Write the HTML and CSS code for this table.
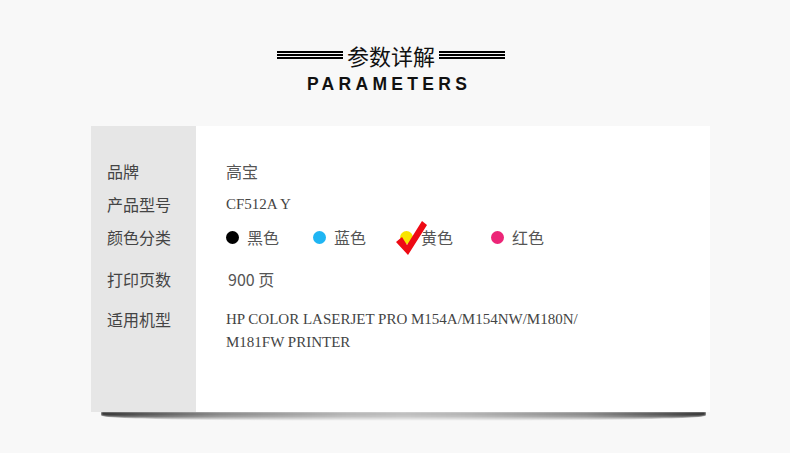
FILE: index.html
```html
<!DOCTYPE html>
<html lang="zh">
<head>
<meta charset="utf-8">
<link rel="stylesheet" href="styles.css">
</head>
<body>
<header class="head">
  <div class="title-row">
    <span class="rule"><i></i><i></i><i></i></span>
    <h1 class="title">参数详解</h1>
    <span class="rule"><i></i><i></i><i></i></span>
  </div>
  <div class="subtitle">PARAMETERS</div>
</header>
<section class="card">
  <div class="label r1">品牌</div><div class="value r1 cjk">高宝</div>
  <div class="label r2">产品型号</div><div class="value r2 serif">CF512A Y</div>
  <div class="label r3">颜色分类</div>
  <div class="value r3 colors">
    <span class="color"><b class="dot black"></b>黑色</span>
    <span class="color"><b class="dot blue"></b>蓝色</span>
    <span class="color picked"><b class="dot yellow"></b>黄色
      <svg class="check" viewBox="0 0 32 35" width="32" height="35"><polygon points="0,21 6,16 11,24 26,0 31,4 12,34" fill="#ee0a14"/></svg>
    </span>
    <span class="color last"><b class="dot pink"></b>红色</span>
  </div>
  <div class="label r4">打印页数</div><div class="value r4 cjk">900 页</div>
  <div class="label r5">适用机型</div><div class="value r5 serif">HP COLOR LASERJET PRO M154A/M154NW/M180N/<br>M181FW PRINTER</div>
</section>
</body>
</html>
```
FILE: styles.css
```css
html, body {
  margin: 0;
  padding: 0;
}
body {
  width: 790px;
  height: 453px;
  background: #f8f8f8;
  font-family: "Noto Sans CJK SC", "Noto Sans", sans-serif;
  overflow: hidden;
}
.head {
  display: flex;
  flex-direction: column;
  align-items: center;
  padding-top: 42px;
}
.title-row {
  display: flex;
  align-items: center;
  gap: 4px;
  margin-left: -8px;
}
.rule {
  display: flex;
  flex-direction: column;
  gap: 1.5px;
  width: 66px;
}
.rule i {
  display: block;
  height: 1.5px;
  background: #000;
}
.title {
  margin: 0;
  font-size: 22px;
  font-weight: 400;
  line-height: 26px;
  color: #111;
}
.subtitle {
  margin-top: 6px;
  margin-left: -12px;
  font-family: "Liberation Sans", Arial, sans-serif;
  font-weight: 700;
  font-size: 17.5px;
  letter-spacing: 4.3px;
  line-height: 20px;
  color: #111;
}
.card {
  position: relative;
  margin: 32px 0 0 91px;
  width: 619px;
  height: 286px;
  box-sizing: border-box;
  padding-top: 29px;
  background: linear-gradient(to right, #e6e6e6 105px, #fff 105px);
  display: grid;
  grid-template-columns: 105px 1fr;
  grid-auto-rows: min-content;
  color: #444;
}
.card::after {
  content: "";
  position: absolute;
  left: 10px;
  right: 4px;
  top: 100%;
  height: 9px;
  background: linear-gradient(to right, #111 0%, #333 6%, #777 20%, #a8a8a8 40%, #b4b4b4 50%, #a8a8a8 60%, #777 80%, #333 94%, #111 100%);
  -webkit-mask-image: linear-gradient(to bottom, #000 0%, rgba(0,0,0,0.7) 50%, transparent 100%);
  mask-image: linear-gradient(to bottom, #000 0%, rgba(0,0,0,0.7) 50%, transparent 100%);
  filter: blur(1px);
  border-radius: 0 0 40% 40% / 0 0 60% 60%;
}
.label {
  padding-left: 16px;
  font-size: 16px;
  line-height: 33px;
  color: #444;
}
.value {
  padding-left: 30px;
  font-size: 16px;
  line-height: 33px;
  color: #555;
}
.serif {
  font-family: "Liberation Serif", "Times New Roman", serif;
  font-size: 15px;
  letter-spacing: 0;
  color: #444;
}
.r4 { margin-top: 9px; }
.r5 { margin-top: 12px; line-height: 23px; }
.value.r4 { padding-left: 32px; }
.colors {
  display: flex;
  align-items: center;
  gap: 34px;
}
.color {
  position: relative;
  display: flex;
  align-items: center;
  gap: 8px;
}
.color.last { margin-left: 4px; }
.dot {
  display: block;
  width: 13px;
  height: 13px;
  border-radius: 50%;
}
.black { background: #000; }
.blue { background: #1fb5f3; }
.yellow { background: #f8e400; }
.pink { background: #ec2577; }
.check {
  position: absolute;
  left: -4px;
  top: 0;
}
```
